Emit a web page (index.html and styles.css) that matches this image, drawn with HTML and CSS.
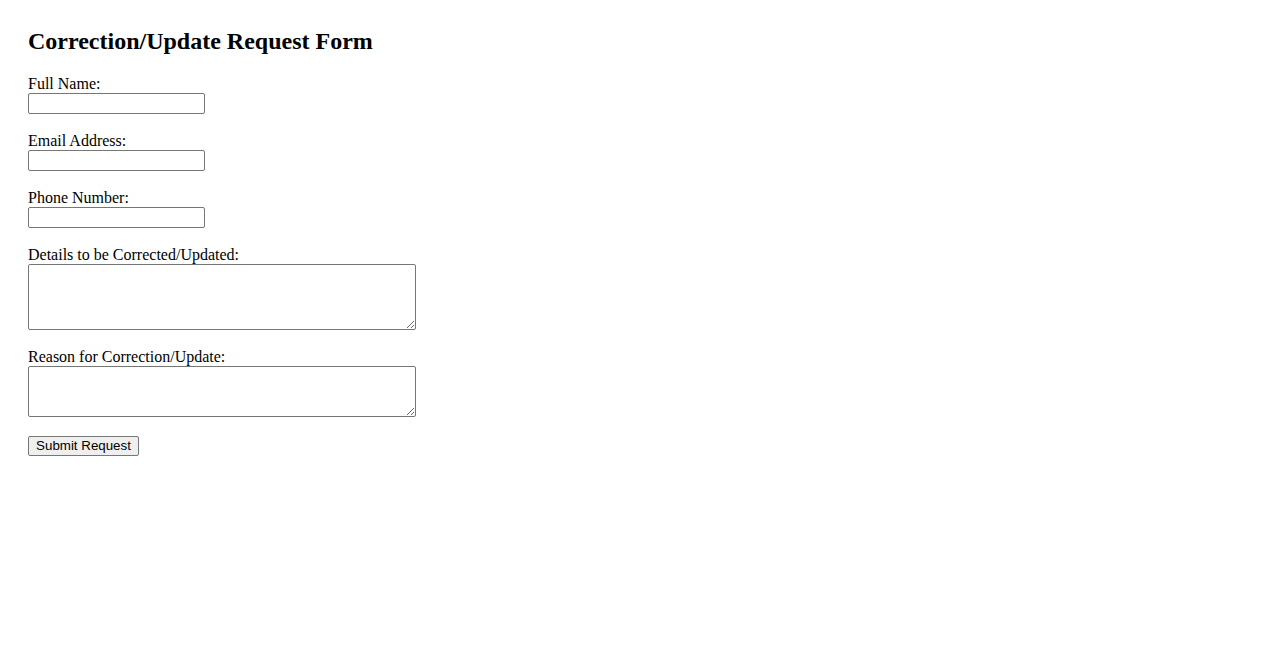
FILE: index.html
```html
<!DOCTYPE html>
<html lang="en">
<head>
<meta charset="utf-8">
<title>Correction/Update Request Form</title>
<link rel="stylesheet" href="styles.css">
</head>
<body>
<div class="page">
  <h2 class="title">Correction/Update Request Form</h2>
  <form class="form">
    <div class="field">
      <label class="label" for="name">Full Name:</label>
      <input class="input" type="text" id="name">
    </div>
    <div class="field">
      <label class="label" for="email">Email Address:</label>
      <input class="input" type="email" id="email">
    </div>
    <div class="field">
      <label class="label" for="phone">Phone Number:</label>
      <input class="input" type="tel" id="phone">
    </div>
    <div class="field">
      <label class="label" for="details">Details to be Corrected/Updated:</label>
      <textarea class="area area-tall" id="details"></textarea>
    </div>
    <div class="field field-last">
      <label class="label" for="reason">Reason for Correction/Update:</label>
      <textarea class="area area-short" id="reason"></textarea>
    </div>
    <button class="submit" type="submit">Submit Request</button>
  </form>
</div>
</body>
</html>
```
FILE: styles.css
```css
html, body {
  margin: 0;
  padding: 0;
  background: #ffffff;
}
body {
  font-family: "Liberation Serif", "Times New Roman", serif;
  font-size: 16px;
  color: #000000;
}
.page {
  padding: 27px 28px 28px 28px;
}
.title {
  margin: 0 0 20px 0;
  font-size: 24px;
  font-weight: bold;
  line-height: 28px;
}
.form {
  display: flex;
  flex-direction: column;
  align-items: flex-start;
}
.field {
  display: flex;
  flex-direction: column;
  align-items: flex-start;
  margin-bottom: 18px;
}
.field-last {
  margin-bottom: 19px;
}
.label {
  line-height: 18px;
  height: 18px;
}
.input {
  box-sizing: border-box;
  width: 177px;
  height: 21px;
  margin: 0;
  padding: 1px 2px;
  border: 1px solid #767676;
  border-radius: 2px;
  font-family: "Liberation Sans", Arial, sans-serif;
  font-size: 13.33px;
  background: #ffffff;
}
.area {
  box-sizing: border-box;
  width: 388px;
  margin: 0;
  padding: 2px;
  border: 1px solid #767676;
  border-radius: 2px;
  font-family: "Liberation Mono", "Courier New", monospace;
  font-size: 13.33px;
  background: #ffffff;
  resize: both;
  display: block;
}
.area-tall {
  height: 66px;
}
.area-short {
  height: 51px;
}
.submit {
  box-sizing: border-box;
  width: 111px;
  height: 20px;
  margin: 0;
  padding: 1px 6px;
  border: 1px solid #767676;
  border-radius: 2px;
  background: #efefef;
  color: #000000;
  font-family: "Liberation Sans", Arial, sans-serif;
  font-size: 13.33px;
  line-height: 16px;
}
```
